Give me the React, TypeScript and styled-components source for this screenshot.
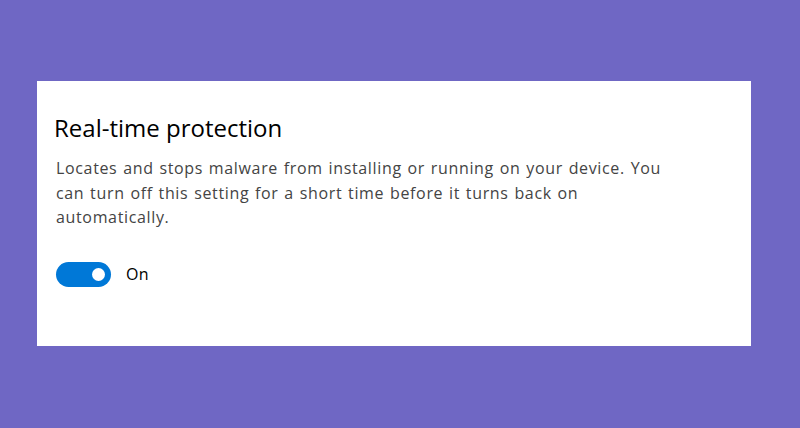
import React from "react";
import styled, { createGlobalStyle } from "styled-components";

const Global = createGlobalStyle`
  html, body { margin: 0; padding: 0; }
  body {
    background: #6f67c4;
    width: 800px;
    height: 428px;
    overflow: hidden;
    font-family: "Open Sans", "Noto Sans", sans-serif;
  }
`;

const Page = styled.div`
  padding: 81px 0 0 37px;
`;

const Card = styled.section`
  box-sizing: border-box;
  width: 714px;
  height: 265px;
  background: #ffffff;
  padding: 31px 18px 0 17px;
  display: flex;
  flex-direction: column;
`;

const Title = styled.h2`
  margin: 0;
  font-weight: 400;
  font-size: 24px;
  line-height: 32px;
  color: #000000;
`;

const Description = styled.p`
  margin: 12px 0 0 2px;
  max-width: 625px;
  font-size: 16px;
  line-height: 24.5px;
  color: #444444;
  letter-spacing: 0.65px;
  word-spacing: 1px;
`;

const ToggleRow = styled.label`
  display: flex;
  align-items: center;
  gap: 15px;
  margin: 32px 0 0 2px;
  cursor: pointer;
`;

const Track = styled.span<{ $on: boolean }>`
  position: relative;
  box-sizing: border-box;
  width: 55px;
  height: 25px;
  border-radius: 13px;
  background: ${(p) => (p.$on ? "#0078d7" : "#ffffff")};
  border: ${(p) => (p.$on ? "none" : "2px solid #333")};
`;

const Knob = styled.span<{ $on: boolean }>`
  position: absolute;
  top: 6px;
  left: ${(p) => (p.$on ? "36px" : "6px")};
  width: 13px;
  height: 13px;
  border-radius: 50%;
  background: ${(p) => (p.$on ? "#ffffff" : "#333")};
`;

const ToggleText = styled.span`
  font-size: 16px;
  letter-spacing: 0.4px;
  color: #000000;
`;

export default function App() {
  const [on, setOn] = React.useState(true);
  return (
    <>
      <Global />
      <Page>
        <Card>
          <Title>Real-time protection</Title>
          <Description>
            Locates and stops malware from installing or running on your device. You can turn off this
            setting for a short time before it turns back on automatically.
          </Description>
          <ToggleRow onClick={() => setOn(!on)}>
            <Track $on={on}>
              <Knob $on={on} />
            </Track>
            <ToggleText>{on ? "On" : "Off"}</ToggleText>
          </ToggleRow>
        </Card>
      </Page>
    </>
  );
}
